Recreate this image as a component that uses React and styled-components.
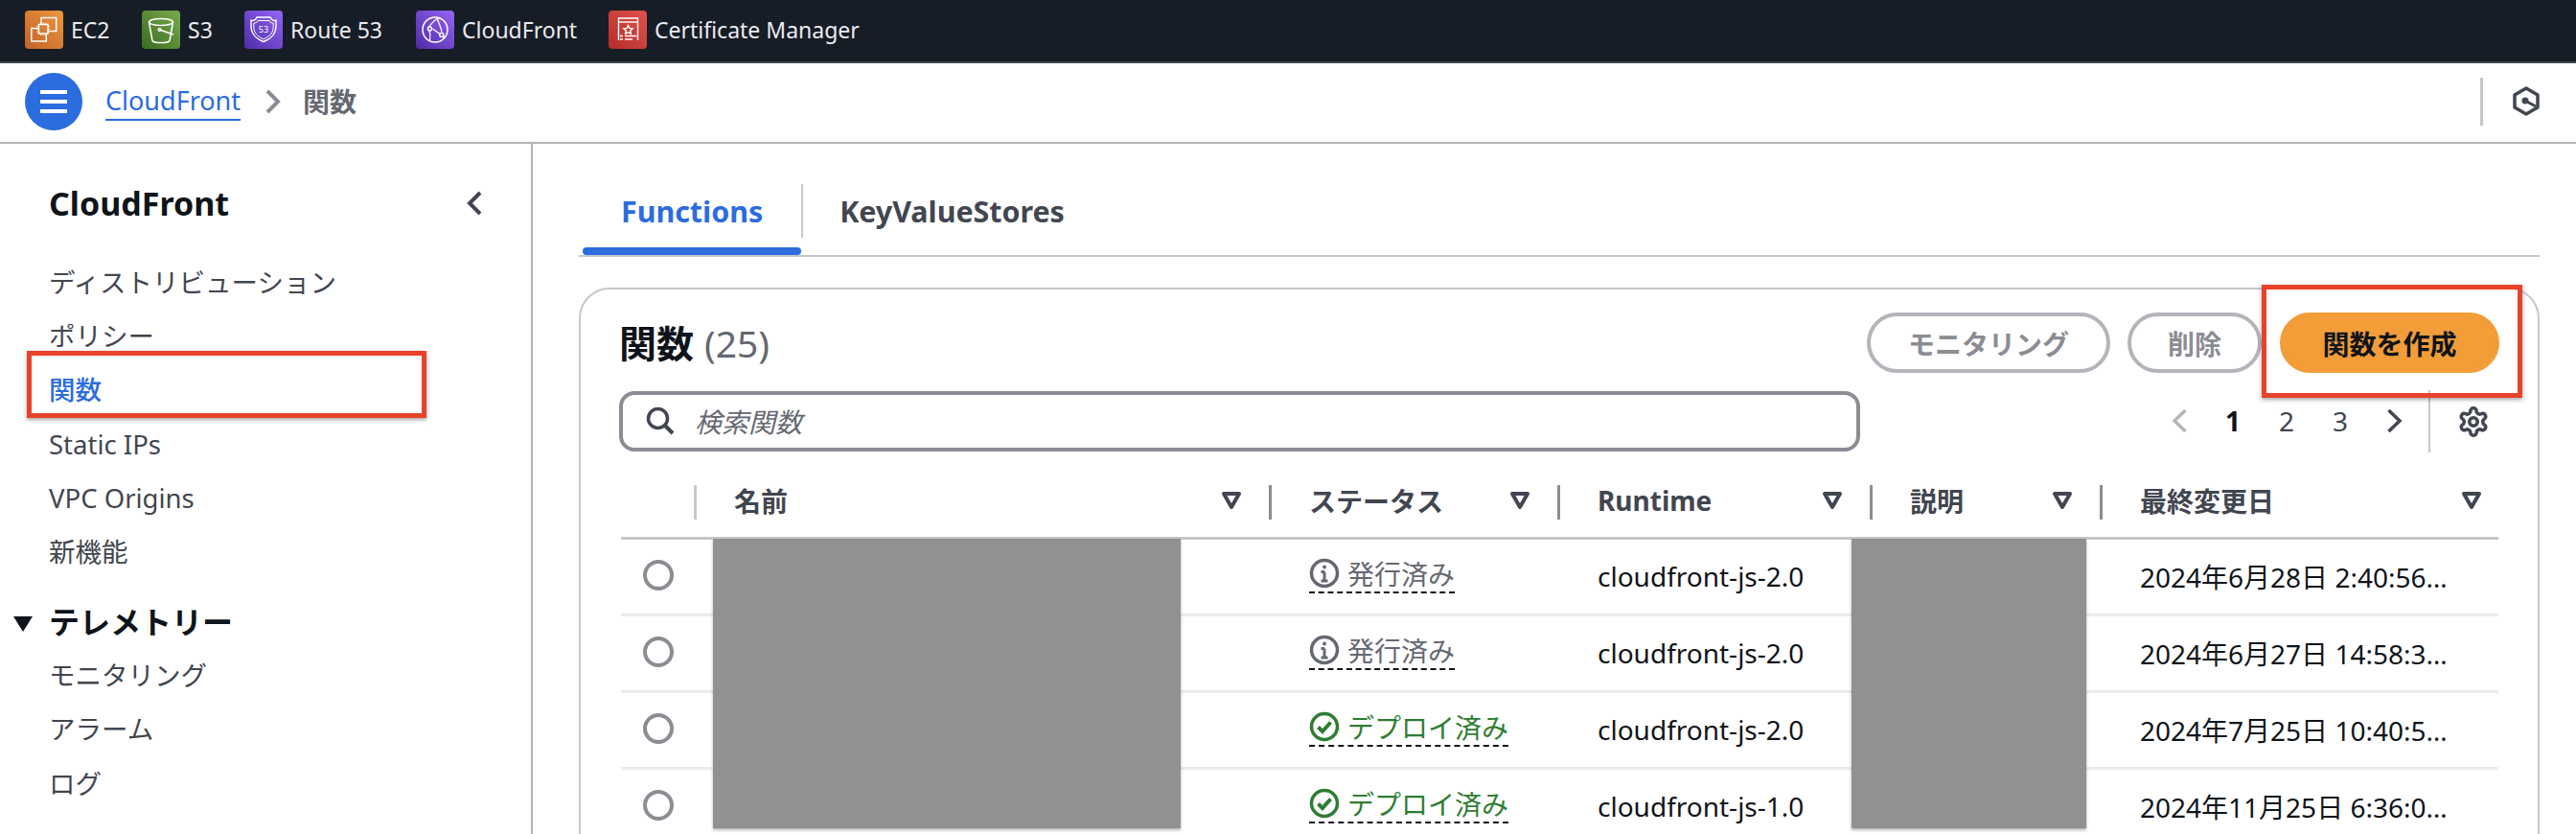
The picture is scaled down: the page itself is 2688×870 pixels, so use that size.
import React from 'react'
import styled, { createGlobalStyle } from 'styled-components'

const GlobalStyle = createGlobalStyle`
  html, body {
    margin: 0;
    padding: 0;
    background: #fff;
  }
  body {
    font-family: "Noto Sans", "Noto Sans CJK JP", sans-serif;
    color: #0f141a;
  }
  * {
    box-sizing: border-box;
  }
`

const Page = styled.div`
  width: 2688px;
  height: 870px;
  overflow: hidden;
  display: flex;
  flex-direction: column;
`

const ServiceBar = styled.div`
  flex: none;
  height: 66px;
  background: #161d26;
  border-bottom: 2px solid #424650;
  display: flex;
  align-items: center;
  padding: 0 0 2px 26px;
`

const Service = styled.div`
  display: flex;
  align-items: center;
  gap: 8px;
  width: ${({ $w }) => $w}px;
  font-size: 23px;
  color: #ebebf0;
  white-space: nowrap;
`

const Tile = styled.div`
  width: 40px;
  height: 40px;
  border-radius: 4px;
  background: linear-gradient(45deg, ${({ $from }) => $from}, ${({ $to }) => $to});
  svg {
    display: block;
  }
`

const Crumbs = styled.div`
  flex: none;
  height: 84px;
  border-bottom: 2px solid #b4b4bb;
  display: flex;
  align-items: center;
  padding-left: 26px;
  padding-bottom: 3px;
`

const MenuButton = styled.div`
  width: 60px;
  height: 60px;
  border-radius: 50%;
  background: #2b6cde;
  display: flex;
  align-items: center;
  justify-content: center;
  margin-right: 24px;
`

const CrumbLink = styled.span`
  font-size: 27px;
  line-height: 38px;
  color: #2b6cde;
  border-bottom: 2px solid #2b6cde;
`

const CrumbChevron = styled.svg`
  margin: 0 23px 0 25px;
`

const CrumbCurrent = styled.span`
  font-size: 28px;
  line-height: 38px;
  font-weight: 700;
  color: #656871;
`

const HexSlot = styled.div`
  margin-left: auto;
  height: 50px;
  width: 100px;
  border-left: 3px solid #c6c6cd;
  display: flex;
  align-items: center;
  padding-left: 31px;
`

const Body = styled.div`
  flex: 1;
  display: flex;
  min-height: 0;
`

const Sidebar = styled.aside`
  flex: none;
  width: 556px;
  border-right: 2px solid #b4b4bb;
  padding: 38px 0 0 51px;
`

const SideHead = styled.div`
  display: flex;
  align-items: center;
  justify-content: space-between;
  height: 48px;
  width: 453px;
  font-size: 34px;
  font-weight: 700;
  color: #0f141a;
  margin-bottom: 31px;
`

const NavItem = styled.div`
  position: relative;
  height: 56.2px;
  line-height: 56px;
  font-size: 27.5px;
  color: ${({ $active }) => ($active ? '#2b6cde' : '#424650')};
  font-weight: ${({ $active }) => ($active ? 500 : 400)};
`

const NavSection = styled.div`
  position: relative;
  margin-top: 17px;
  height: 56px;
  line-height: 56px;
  font-size: 32px;
  font-weight: 700;
  color: #0f141a;
  svg {
    position: absolute;
    left: -37px;
    top: 22px;
  }
`

const Callout = styled.div`
  position: absolute;
  top: ${({ $t }) => $t}px;
  left: ${({ $l }) => $l}px;
  width: ${({ $w }) => $w}px;
  height: ${({ $h }) => $h}px;
  border: 5px solid #e8432a;
  box-shadow: 0 2px 4px rgba(0, 0, 0, 0.35);
  pointer-events: none;
`

const Main = styled.main`
  flex: 1;
  min-width: 0;
  padding: 26px 38px 0 48px;
`

const Tabs = styled.div`
  display: flex;
  border-bottom: 2px solid #c6c6cd;
  padding-left: 4px;
`

const Tab = styled.div`
  position: relative;
  height: 90px;
  padding: 0 40px 2px;
  display: flex;
  align-items: center;
  font-size: 30.4px;
  font-weight: 700;
  color: ${({ $active }) => ($active ? '#2b6cde' : '#424650')};
  &::after {
    content: '';
    display: ${({ $active }) => ($active ? 'block' : 'none')};
    position: absolute;
    left: 0;
    right: 0;
    bottom: 0;
    height: 8px;
    border-radius: 4px;
    background: #2b6cde;
  }
  &:not(:first-child)::before {
    content: '';
    position: absolute;
    left: 0;
    top: 16px;
    height: 56px;
    width: 2px;
    background: #c6c6cd;
  }
`

const Card = styled.section`
  position: relative;
  margin-top: 32px;
  height: 640px;
  border: 2px solid #c6c6cd;
  border-radius: 32px;
  padding: 24px 41px 0 40px;
`

const CardHead = styled.div`
  display: flex;
  align-items: center;
  justify-content: space-between;
`

const Title = styled.h2`
  margin: 0;
  font-size: 39px;
  line-height: 60px;
  font-weight: 700;
  color: #0f141a;
  span {
    font-weight: 400;
    color: #656871;
    margin-left: 11px;
    font-size: 39px;
  }
`

const Actions = styled.div`
  display: flex;
  gap: 18px;
  margin-right: -1px;
`

const ActionWrap = styled.div`
  position: relative;
  margin-left: 1px;
`

const Action = styled.div`
  width: ${({ $w }) => $w}px;
  height: 63px;
  border-radius: 32px;
  display: flex;
  align-items: center;
  justify-content: center;
  font-size: 28px;
  font-weight: 700;
  border: 4px solid ${({ $primary }) => ($primary ? '#f29d38' : '#b4b4bb')};
  background: ${({ $primary }) => ($primary ? '#f29d38' : '#fff')};
  color: ${({ $primary }) => ($primary ? '#0f141a' : '#8c8c94')};
`

const SearchRow = styled.div`
  display: flex;
  align-items: center;
  margin-top: 18px;
`

const SearchBox = styled.div`
  width: 1295px;
  height: 63px;
  border: 4px solid #8c8c94;
  border-radius: 16px;
  display: flex;
  align-items: center;
  gap: 20px;
  padding-left: 23px;
  padding-bottom: 2px;
  font-size: 28px;
  font-style: italic;
  color: #656871;
`

const Pager = styled.div`
  margin-left: auto;
  display: flex;
  align-items: center;
`

const PageItem = styled.div`
  width: 56px;
  height: 40px;
  margin-bottom: 2px;
  line-height: 40px;
  text-align: center;
  font-size: 28px;
  font-weight: ${({ $active }) => ($active ? 700 : 400)};
  color: ${({ $active }) => ($active ? '#0f141a' : '#424650')};
  svg {
    display: block;
    margin: 7px auto 0;
  }
`

const PagerRule = styled.div`
  width: 2px;
  height: 65px;
  margin-left: 8px;
  background: #c6c6cd;
`

const Gear = styled.svg`
  margin: 0 9px 0 28px;
`

const Table = styled.div`
  margin-left: 2px;
`

const HeadRow = styled.div`
  display: grid;
  grid-template-columns: 76px 600px 301px 326px 240px 1fr;
  height: 91px;
  padding-top: 34px;
  border-bottom: 3px solid #c6c6cd;
`

const HeadCell = styled.div`
  position: relative;
  height: 36px;
  display: flex;
  align-items: center;
  justify-content: space-between;
  padding: 0 ${({ $end }) => ($end ? 17 : 28)}px 4px 42px;
  font-size: 28px;
  font-weight: 700;
  color: #424650;
  &::before {
    content: '';
    position: absolute;
    left: 0;
    top: 0;
    bottom: 0;
    width: 3px;
    background: ${({ $light }) => ($light ? '#c6c6cd' : '#8c8c94')};
  }
`

const Row = styled.div`
  display: grid;
  grid-template-columns: 76px 600px 301px 326px 240px 1fr;
  height: 80px;
  align-items: center;
  padding-bottom: 2px;
  border-bottom: 3px solid #ebebf0;
  font-size: 28px;
  color: #0f141a;
`

const Radio = styled.div`
  width: 32px;
  height: 32px;
  border-radius: 50%;
  border: 4px solid #8c8c94;
  margin: 0 0 2px 23px;
`

const Cell = styled.div`
  padding-left: 42px;
  white-space: nowrap;
`

const Status = styled.span`
  display: inline-flex;
  align-items: center;
  gap: 8px;
  height: 40px;
  border-bottom: 2px dashed #0f141a;
  color: ${({ $ok }) => ($ok ? '#2e7d32' : '#656871')};
`

const Redaction = styled.div`
  position: absolute;
  top: 260px;
  left: ${({ $l }) => $l}px;
  width: ${({ $w }) => $w}px;
  height: 302px;
  background: #919191;
  box-shadow: 0 2px 3px rgba(0, 0, 0, 0.3);
`

function Ec2Icon() {
  return (
    <svg width="40" height="40" viewBox="0 0 40 40" fill="none" stroke="#fff" strokeWidth="1.5">
      <path d="M17 14V7.5h15.7v14h-7" />
      <path d="M14 18.500H6.800V32h15.500v-7" />
      <rect x="14.500" y="14.500" width="9.500" height="9.500" />
      <path d="M16.500 12.500v2M19.200 12.500v2M22 12.500v2M16.500 24v2M19.200 24v2M22 24v2M12.500 16.500h2M12.500 19.200h2M12.500 22h2M24 16.500h2M24 19.200h2M24 22h2" strokeWidth="1" />
    </svg>
  )
}

function S3Icon() {
  return (
    <svg width="40" height="40" viewBox="0 0 40 40" fill="none" stroke="#fff" strokeWidth="1.5">
      <ellipse cx="20" cy="12" rx="12.500" ry="3.600" />
      <path d="M7.500 12l3.400 19c.4 1.600 4.600 2.600 9.100 2.600s8.700-1 9.100-2.600l3.400-19" />
      <circle cx="18.500" cy="20" r="1.300" />
      <path d="M20 20.500l13 4.500" strokeWidth="1.600" />
    </svg>
  )
}

function Route53Icon() {
  return (
    <svg width="40" height="40" viewBox="0 0 40 40" fill="none" stroke="#fff" strokeWidth="1.400">
      <path d="M13 7h14l1.500 2.400c1.600 1 3.300 1.200 4.500.8v6c0 7-3 12-13 16.300C10 28.200 7 23.200 7 16.200v-6c1.200.4 2.900.2 4.500-.8z" />
      <path d="M14 10.500h12l1 1.700c1.200.7 2.100.9 3.200.9v3.700c0 5.500-2.500 9.600-10.200 13C12.300 26.400 9.800 22.300 9.800 16.800v-3.700c1.100 0 2-.2 3.200-.9z" strokeWidth="1" />
      <text x="20" y="23" textAnchor="middle" fontSize="9" fontFamily="Noto Sans" fill="#fff" stroke="none">53</text>
    </svg>
  )
}

function CloudFrontIcon() {
  return (
    <svg width="40" height="40" viewBox="0 0 40 40" fill="none" stroke="#fff" strokeWidth="1.500">
      <circle cx="20" cy="20" r="13" />
      <path d="M13 18.500c3-6 8-9.500 12-11M14 20.500c1.200 3.500 1 8 .5 11M17.500 19l7.500 5.500M22 8c1.500 4 4 9 5 14.500M30 27c-1 1-3 .6-3-.6" strokeWidth="1.300" />
      <circle cx="14.500" cy="19" r="2" fill="#6a3fc8" />
      <circle cx="26.800" cy="25.500" r="2" fill="#6a3fc8" />
    </svg>
  )
}

function CertIcon() {
  return (
    <svg width="40" height="40" viewBox="0 0 40 40" fill="none" stroke="#fff" strokeWidth="1.400">
      <path d="M10.500 31V8h20v23" />
      <path d="M10.500 12h20" />
      <path d="M20.500 15.500l1.400 2.900 3.200.4-2.300 2.200.6 3.200-2.900-1.500-2.900 1.500.6-3.200-2.300-2.200 3.200-.4z" />
      <path d="M12 26.500h3M17 26.500h12M12 30h3M17 30h8" />
    </svg>
  )
}

function HexIcon() {
  return (
    <svg width="28" height="31" viewBox="0 0 28 31" fill="none" stroke="#424650">
      <path d="M14 2l12 7v13l-12 7-12-7V9z" strokeWidth="3.500" strokeLinejoin="round" />
      <circle cx="13" cy="15" r="3.500" fill="#424650" stroke="none" />
      <path d="M13 15l11 6" strokeWidth="3" />
    </svg>
  )
}

function SortIcon() {
  return (
    <svg width="22" height="20" viewBox="0 0 22 20" fill="none">
      <path d="M3 3h16L11 17z" stroke="#424650" strokeWidth="4" strokeLinejoin="round" />
    </svg>
  )
}

function PagerChevron({ left, color }) {
  return (
    <svg width="17" height="26" viewBox="0 0 17 26" fill="none">
      <path d={left ? 'M14.500 2L3 13l11.500 11' : 'M2.500 2L14 13 2.500 24'} stroke={color} strokeWidth="3.500" />
    </svg>
  )
}

function InfoIcon() {
  return (
    <svg width="32" height="32" viewBox="0 0 32 32" fill="none" stroke="#656871">
      <circle cx="16" cy="16" r="13.500" strokeWidth="3.500" />
      <path d="M16 14.500V24M12.500 14.500H16M12.500 24h7" strokeWidth="3" />
      <circle cx="16" cy="9.500" r="2" fill="#656871" stroke="none" />
    </svg>
  )
}

function CheckIcon() {
  return (
    <svg width="32" height="32" viewBox="0 0 32 32" fill="none" stroke="#2e7d32">
      <circle cx="16" cy="16" r="13.500" strokeWidth="3.500" />
      <path d="M9.500 16.500l4.500 4.500 8.500-9.500" strokeWidth="4" />
    </svg>
  )
}

const services = [
  { name: 'EC2', w: 122, from: '#c4622a', to: '#ec983c', icon: <Ec2Icon /> },
  { name: 'S3', w: 107, from: '#3a6b1f', to: '#7bab4e', icon: <S3Icon /> },
  { name: 'Route 53', w: 179, from: '#4f2ba6', to: '#9565f5', icon: <Route53Icon /> },
  { name: 'CloudFront', w: 201, from: '#4f2ba6', to: '#9565f5', icon: <CloudFrontIcon /> },
  { name: 'Certificate Manager', w: 270, from: '#b32d2a', to: '#e2524c', icon: <CertIcon /> },
]

const navMain = ['ディストリビューション', 'ポリシー', '関数', 'Static IPs', 'VPC Origins', '新機能']
const navTelemetry = ['モニタリング', 'アラーム', 'ログ']

const rows = [
  { ok: false, label: '発行済み', runtime: 'cloudfront-js-2.0', date: '2024年6月28日 2:40:56…' },
  { ok: false, label: '発行済み', runtime: 'cloudfront-js-2.0', date: '2024年6月27日 14:58:3…' },
  { ok: true, label: 'デプロイ済み', runtime: 'cloudfront-js-2.0', date: '2024年7月25日 10:40:5…' },
  { ok: true, label: 'デプロイ済み', runtime: 'cloudfront-js-1.0', date: '2024年11月25日 6:36:0…' },
]

const columns = [
  { name: '名前', light: true },
  { name: 'ステータス' },
  { name: 'Runtime' },
  { name: '説明' },
  { name: '最終変更日', end: true },
]

export default function App() {
  return (
    <Page>
      <GlobalStyle />
      <ServiceBar>
        {services.map((s) => (
          <Service key={s.name} $w={s.w}>
            <Tile $from={s.from} $to={s.to}>{s.icon}</Tile>
            {s.name}
          </Service>
        ))}
      </ServiceBar>

      <Crumbs>
        <MenuButton>
          <svg width="28" height="24" viewBox="0 0 28 24" fill="#fff">
            <rect width="28" height="4" />
            <rect y="10" width="28" height="4" />
            <rect y="20" width="28" height="4" />
          </svg>
        </MenuButton>
        <CrumbLink>CloudFront</CrumbLink>
        <CrumbChevron width="17" height="26" viewBox="0 0 17 26" fill="none">
          <path d="M3 2l11 11L3 24" stroke="#8c8c94" strokeWidth="4" />
        </CrumbChevron>
        <CrumbCurrent>関数</CrumbCurrent>
        <HexSlot><HexIcon /></HexSlot>
      </Crumbs>

      <Body>
        <Sidebar>
          <SideHead>
            CloudFront
            <svg width="18" height="28" viewBox="0 0 18 28" fill="none">
              <path d="M15 3L4 14l11 11" stroke="#424650" strokeWidth="4" />
            </svg>
          </SideHead>
          {navMain.map((item) => (
            <NavItem key={item} $active={item === '関数'}>
              {item}
              {item === '関数' && <Callout $t={-13} $l={-23} $w={417} $h={70} />}
            </NavItem>
          ))}
          <NavSection>
            <svg width="20" height="16" viewBox="0 0 20 16" fill="#0f141a">
              <path d="M0 0h20L10 16z" />
            </svg>
            テレメトリー
          </NavSection>
          {navTelemetry.map((item) => (
            <NavItem key={item}>{item}</NavItem>
          ))}
        </Sidebar>

        <Main>
          <Tabs>
            <Tab $active>Functions</Tab>
            <Tab>KeyValueStores</Tab>
          </Tabs>

          <Card>
            <CardHead>
              <Title>関数<span>(25)</span></Title>
              <Actions>
                <Action $w={254}>モニタリング</Action>
                <Action $w={140}>削除</Action>
                <ActionWrap>
                  <Action $w={229} $primary>関数を作成</Action>
                  <Callout $t={-29} $l={-19} $w={272} $h={118} />
                </ActionWrap>
              </Actions>
            </CardHead>

            <SearchRow>
              <SearchBox>
                <svg width="32" height="32" viewBox="0 0 32 32" fill="none" stroke="#424650" strokeWidth="3.500">
                  <circle cx="13.500" cy="13.500" r="10" />
                  <path d="M20.500 20.500L29 29" strokeWidth="4" />
                </svg>
                検索関数
              </SearchBox>
              <Pager>
                <PageItem><PagerChevron left color="#b4b4bb" /></PageItem>
                <PageItem $active>1</PageItem>
                <PageItem>2</PageItem>
                <PageItem>3</PageItem>
                <PageItem><PagerChevron color="#424650" /></PageItem>
                <PagerRule />
                <Gear width="34" height="34" viewBox="0 0 24 24" fill="none" stroke="#424650" strokeWidth="2.500">
                  <path d="M12.220 2h-.44a2 2 0 0 0-2 2v.18a2 2 0 0 1-1 1.730l-.43.250a2 2 0 0 1-2 0l-.150-.080a2 2 0 0 0-2.730.730l-.220.380a2 2 0 0 0 .730 2.730l.150.100a2 2 0 0 1 1 1.720v.510a2 2 0 0 1-1 1.740l-.150.090a2 2 0 0 0-.730 2.730l.220.380a2 2 0 0 0 2.730.730l.150-.080a2 2 0 0 1 2 0l.430.250a2 2 0 0 1 1 1.730V20a2 2 0 0 0 2 2h.440a2 2 0 0 0 2-2v-.180a2 2 0 0 1 1-1.730l.430-.250a2 2 0 0 1 2 0l.150.080a2 2 0 0 0 2.730-.730l.220-.390a2 2 0 0 0-.730-2.730l-.150-.080a2 2 0 0 1-1-1.740v-.500a2 2 0 0 1 1-1.740l.150-.090a2 2 0 0 0 .730-2.730l-.220-.380a2 2 0 0 0-2.730-.730l-.150.080a2 2 0 0 1-2 0l-.430-.250a2 2 0 0 1-1-1.730V4a2 2 0 0 0-2-2z" />
                  <circle cx="12" cy="12" r="3" />
                </Gear>
              </Pager>
            </SearchRow>

            <Table>
              <HeadRow>
                <div />
                {columns.map((c) => (
                  <HeadCell key={c.name} $light={c.light} $end={c.end}>
                    {c.name}
                    <SortIcon />
                  </HeadCell>
                ))}
              </HeadRow>
              {rows.map((r) => (
                <Row key={r.date}>
                  <Radio />
                  <Cell />
                  <Cell>
                    <Status $ok={r.ok}>
                      {r.ok ? <CheckIcon /> : <InfoIcon />}
                      {r.label}
                    </Status>
                  </Cell>
                  <Cell>{r.runtime}</Cell>
                  <Cell />
                  <Cell>{r.date}</Cell>
                </Row>
              ))}
            </Table>

            <Redaction $l={138} $w={488} />
            <Redaction $l={1326} $w={245} />
          </Card>
        </Main>
      </Body>
    </Page>
  )
}
